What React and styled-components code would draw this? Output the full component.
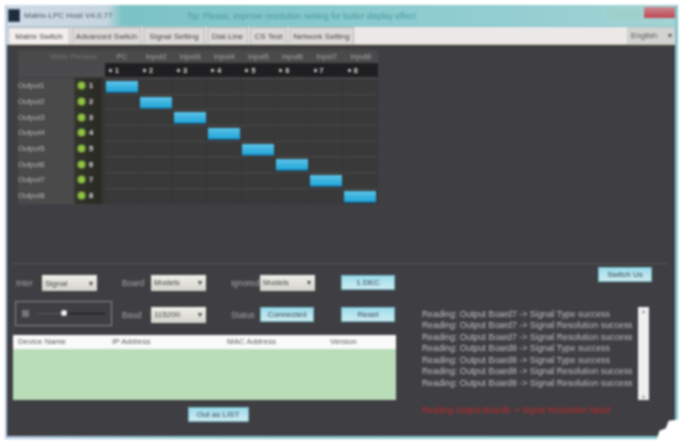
import React from "react";
import styled, { createGlobalStyle } from "styled-components";

const GlobalStyle = createGlobalStyle`
  html, body {
    margin: 0;
    padding: 0;
    background: #fff;
    font-family: "Liberation Sans", Arial, sans-serif;
  }
`;

const Page = styled.div`
  position: relative;
  width: 684px;
  height: 442px;
  overflow: hidden;
  padding: 5px 6px 3px 5px;
  box-sizing: border-box;
  background: #fff;
  filter: blur(0.85px);
`;

const Window = styled.div`
  height: 100%;
  display: flex;
  flex-direction: column;
  padding: 0 3px 3px 2px;
  box-sizing: border-box;
  background: linear-gradient(90deg, #b9c9e2 0%, #8fc9cf 30%, #86c6cb 100%);
`;

const TitleBar = styled.div`
  height: 21px;
  flex: none;
  display: flex;
  align-items: center;
  padding-left: 1px;
  background: linear-gradient(90deg, #cfdbe6 0, #c6d6e0 100px, #7cc3c6 115px, #86c9cc 300px, #93ced2 500px, #a4d4d4 100%);
`;

const AppIcon = styled.div`
  width: 10px;
  height: 11px;
  background: #1d2c3e;
  border: 1px solid #44566a;
`;

const AppTitle = styled.span`
  margin-left: 4px;
  width: 84px;
  font-size: 8px;
  color: #4a5560;
  white-space: nowrap;
`;

const Notice = styled.span`
  margin-left: 79px;
  font-size: 8.4px;
  color: #4a989e;
  white-space: nowrap;
`;

const WindowButtons = styled.div`
  margin-left: auto;
  display: flex;
  align-items: flex-start;
  align-self: flex-start;
  gap: 3px;
  padding-top: 2px;
`;

const MinMax = styled.div`
  width: 34px;
  height: 9px;
  margin-top: 2px;
  background: #9ecfc8;
`;

const CloseButton = styled.div`
  width: 31px;
  height: 11px;
  background: linear-gradient(#c98a92, #c0454f);
`;

const TabStrip = styled.div`
  height: 17px;
  flex: none;
  margin-top: 1px;
  display: flex;
  gap: 2px;
  padding-left: 1px;
  border-bottom: 1px solid #c9ccb4;
  background: #ece8e8;
`;

const Tab = styled.div`
  width: ${(p) => p.$w}px;
  display: flex;
  align-items: center;
  justify-content: center;
  box-sizing: border-box;
  font-size: 8px;
  color: #454545;
  white-space: nowrap;
  background: ${(p) => (p.$active ? "#f2eeee" : "#dcdad8")};
  border: 1px solid #b4b4b4;
  border-bottom: 0;
`;

const Language = styled.div`
  margin-left: auto;
  width: 48px;
  display: flex;
  align-items: center;
  justify-content: space-between;
  box-sizing: border-box;
  padding: 0 3px 0 4px;
  font-size: 8px;
  color: #555;
  background: #d2d2d0;
`;

const Content = styled.div`
  flex: 1;
  display: flex;
  flex-direction: column;
  padding-top: 5px;
  background: #3f3e42;
`;

const Matrix = styled.div`
  display: grid;
  grid-template-columns: 87px repeat(8, 34.1px);
  grid-template-rows: 13px 15px repeat(8, 15.7px);
  width: 360px;
  margin-left: 11px;
`;

const HeadLabel = styled.div`
  display: flex;
  align-items: center;
  justify-content: center;
  font-size: 7.5px;
  color: #a9a9a9;
  background: #4b4a4a;
`;

const CornerCell = styled(HeadLabel)`
  justify-content: flex-end;
  padding-right: 8px;
  color: #777;
`;

const NumberCell = styled.div`
  height: 14px;
  padding-left: 4px;
  display: flex;
  align-items: center;
  gap: 3px;
  font-size: 7px;
  font-weight: bold;
  color: #e4e4e4;
  background: #1f1f21;
`;

const BlankCorner = styled.div`
  height: 14px;
  background: #4b4a4c;
`;

const Dot = styled.span`
  width: 3px;
  height: 3px;
  background: #bbb;
`;

const RowHead = styled.div`
  display: flex;
  align-items: center;
  font-size: 7.5px;
  color: #b9b9b9;
  background: linear-gradient(90deg, #4a4a4b 0, #4a4a4b 55px, #2f3328 58px, #2b2a26 82px, #3a3a38 87px);
`;

const RowName = styled.span`
  width: 60px;
`;

const Led = styled.span`
  width: 7px;
  height: 7px;
  border-radius: 50%;
  background: #8fc63f;
  box-shadow: 0 0 2px #b7e06a;
`;

const RowNumber = styled.span`
  margin-left: 4px;
  font-weight: bold;
  color: #e8e8e8;
`;

const Cell = styled.div`
  box-sizing: border-box;
  background: #393939;
  border-top: 1px solid #4a4a4a;
  border-right: 1px solid #343434;
  display: flex;
  align-items: center;
  justify-content: center;
`;

const RouteBar = styled.div`
  width: 32px;
  height: 11px;
  background: linear-gradient(#5cc3e8, #1fa4d8);
  box-shadow: 0 1px 1px #14476a;
`;

const Separator = styled.div`
  height: 1px;
  margin: 59px 7px 0 5px;
  background: #565558;
`;

const Lower = styled.div`
  flex: 1;
  display: flex;
`;

const LeftColumn = styled.div`
  width: 395px;
  padding-left: 6px;
  flex: none;
`;

const Controls = styled.div`
  display: grid;
  grid-template-columns: 106px 29px 55px 25px 29px 55px 26px 54px;
  grid-auto-rows: 17px;
  row-gap: 15px;
  margin: 11px 0 0 3px;
`;

const FirstField = styled.div`
  display: flex;
  align-items: center;
  justify-content: space-between;
  width: 81px;
  grid-column: 1;
`;

const Label = styled.span`
  align-self: center;
  font-size: 8.4px;
  color: #a8a8a8;
  white-space: nowrap;
`;

const Select = styled.div`
  height: 16px;
  width: 55px;
  box-sizing: border-box;
  display: flex;
  align-items: center;
  justify-content: space-between;
  padding: 0 4px 0 3px;
  font-size: 8px;
  color: #3f3f3f;
  background: linear-gradient(#f0efe9, #d3d3cc);
`;

const LightButton = styled.div`
  height: 15px;
  width: ${(p) => p.$w || 54}px;
  box-sizing: border-box;
  display: flex;
  align-items: center;
  justify-content: center;
  font-size: 8px;
  color: #33454d;
  white-space: nowrap;
  background: linear-gradient(#9fdcee, #cdebf0);
  border: 1px solid #6fb6be;
`;

const SliderBox = styled.div`
  width: 97px;
  height: 25px;
  margin: -6px 0 0 -1px;
  box-sizing: border-box;
  display: flex;
  align-items: center;
  padding: 0 6px;
  border: 1px solid #8a8a8a;
`;

const MuteBox = styled.span`
  width: 7px;
  height: 7px;
  background: #77777a;
`;

const SliderTrack = styled.div`
  flex: 1;
  margin-left: 8px;
  display: flex;
  align-items: center;
`;

const TrackLine = styled.span`
  flex: ${(p) => p.$grow};
  height: 1px;
  background: ${(p) => p.$color};
`;

const Knob = styled.span`
  width: 6px;
  height: 6px;
  border-radius: 50%;
  background: #f2f0e8;
`;

const DeviceTable = styled.div`
  width: 383px;
  height: 65px;
  margin-top: 11px;
  display: flex;
  flex-direction: column;
  background: #b9dcb9;
`;

const TableHead = styled.div`
  height: 14px;
  flex: none;
  display: grid;
  grid-template-columns: 94px 115px 103px 1fr;
  align-items: center;
  padding-left: 5px;
  font-size: 8px;
  color: #55585a;
  background: #fbfafa;
`;

const OutRow = styled.div`
  display: flex;
  justify-content: center;
  width: 383px;
  margin-top: 7px;
  padding-left: 27px;
  box-sizing: border-box;
`;

const RightColumn = styled.div`
  flex: 1;
  display: flex;
  flex-direction: column;
  padding: 3px 23px 0 14px;
`;

const SwitchRow = styled.div`
  display: flex;
  justify-content: flex-end;
`;

const LogWrap = styled.div`
  display: flex;
  margin-top: 25px;
`;

const LogList = styled.div`
  width: 216px;
  padding-top: 2px;
  box-sizing: border-box;
`;

const LogLine = styled.div`
  height: 11.5px;
  line-height: 11.5px;
  font-size: 8.8px;
  color: #c2c2c4;
  white-space: nowrap;
  overflow: hidden;
`;

const LogScroll = styled.div`
  width: 11px;
  height: 93px;
  display: flex;
  flex-direction: column;
  justify-content: space-between;
  align-items: center;
  font-size: 6px;
  color: #888;
  background: #efefef;
`;

const ErrorText = styled.div`
  margin-top: 5px;
  font-size: 8.4px;
  color: #c02a2a;
  white-space: nowrap;
`;

const TornCorner = styled.div`
  position: absolute;
  right: 0;
  bottom: 0;
  width: 28px;
  height: 25px;
  background: #fff;
  clip-path: polygon(100% 0, 100% 100%, 0 100%, 12% 55%, 35% 45%, 45% 15%, 80% 10%);
`;

const inputs = ["PC", "Input2", "Input3", "Input4", "Input5", "Input6", "Input7", "Input8"];
const outputs = ["Output1", "Output2", "Output3", "Output4", "Output5", "Output6", "Output7", "Output8"];
const tabs = [
  ["Matrix Switch", 62, true],
  ["Advanced Switch", 69],
  ["Signal Setting", 62],
  ["Dial-Line", 41],
  ["CS Test", 37],
  ["Network Setting", 65],
];
const logs = [
  "Reading: Output Board7 -> Signal Type success",
  "Reading: Output Board7 -> Signal Resolution success",
  "Reading: Output Board7 -> Signal Resolution success",
  "Reading: Output Board8 -> Signal Type success",
  "Reading: Output Board8 -> Signal Type success",
  "Reading: Output Board8 -> Signal Resolution success",
  "Reading: Output Board8 -> Signal Resolution success",
];

const App = () => {
  return (
    <Page>
      <GlobalStyle />
      <Window>
        <TitleBar>
          <AppIcon />
          <AppTitle>Matrix-LPC Host V4.0.77</AppTitle>
          <Notice>Tip: Please, improve resolution setting for better display effect</Notice>
          <WindowButtons>
            <MinMax />
            <CloseButton />
          </WindowButtons>
        </TitleBar>

        <TabStrip>
          {tabs.map(([name, w, active]) => (
            <Tab key={name} $w={w} $active={active}>
              {name}
            </Tab>
          ))}
          <Language>
            English <span>▾</span>
          </Language>
        </TabStrip>

        <Content>
          <Matrix>
            <CornerCell>Video Preview</CornerCell>
            {inputs.map((name) => (
              <HeadLabel key={name}>{name}</HeadLabel>
            ))}
            <BlankCorner />
            {inputs.map((name, i) => (
              <NumberCell key={name}>
                <Dot />
                {i + 1}
              </NumberCell>
            ))}
            {outputs.map((name, row) => (
              <React.Fragment key={name}>
                <RowHead>
                  <RowName>{name}</RowName>
                  <Led />
                  <RowNumber>{row + 1}</RowNumber>
                </RowHead>
                {inputs.map((input, col) => (
                  <Cell key={input}>{col === row && <RouteBar />}</Cell>
                ))}
              </React.Fragment>
            ))}
          </Matrix>

          <Separator />

          <Lower>
            <LeftColumn>
              <Controls>
                <FirstField>
                  <Label>Inter</Label>
                  <Select>
                    Signal <span>▾</span>
                  </Select>
                </FirstField>
                <Label>Board</Label>
                <Select>
                  Models <span>▾</span>
                </Select>
                <span />
                <Label>Ignored</Label>
                <Select>
                  Models <span>▾</span>
                </Select>
                <span />
                <LightButton>1.DEC</LightButton>

                <SliderBox>
                  <MuteBox />
                  <SliderTrack>
                    <TrackLine $grow={5} $color="#5c5c5c" />
                    <Knob />
                    <TrackLine $grow={8} $color="#161616" />
                  </SliderTrack>
                </SliderBox>
                <Label>Baud</Label>
                <Select>
                  115200 <span>▾</span>
                </Select>
                <span />
                <Label>Status</Label>
                <LightButton>Connected</LightButton>
                <span />
                <LightButton>Reset</LightButton>
              </Controls>

              <DeviceTable>
                <TableHead>
                  <span>Device Name</span>
                  <span>IP Address</span>
                  <span>MAC Address</span>
                  <span>Version</span>
                </TableHead>
              </DeviceTable>

              <OutRow>
                <LightButton $w={61}>Out as LIST</LightButton>
              </OutRow>
            </LeftColumn>

            <RightColumn>
              <SwitchRow>
                <LightButton>Switch Us</LightButton>
              </SwitchRow>
              <LogWrap>
                <LogList>
                  {logs.map((line, i) => (
                    <LogLine key={i}>{line}</LogLine>
                  ))}
                </LogList>
                <LogScroll>
                  <span>▴</span>
                  <span>▾</span>
                </LogScroll>
              </LogWrap>
              <ErrorText>Reading Output Board8 -&gt; Signal Resolution failed</ErrorText>
            </RightColumn>
          </Lower>
        </Content>
      </Window>
      <TornCorner />
    </Page>
  );
};

export default App;
